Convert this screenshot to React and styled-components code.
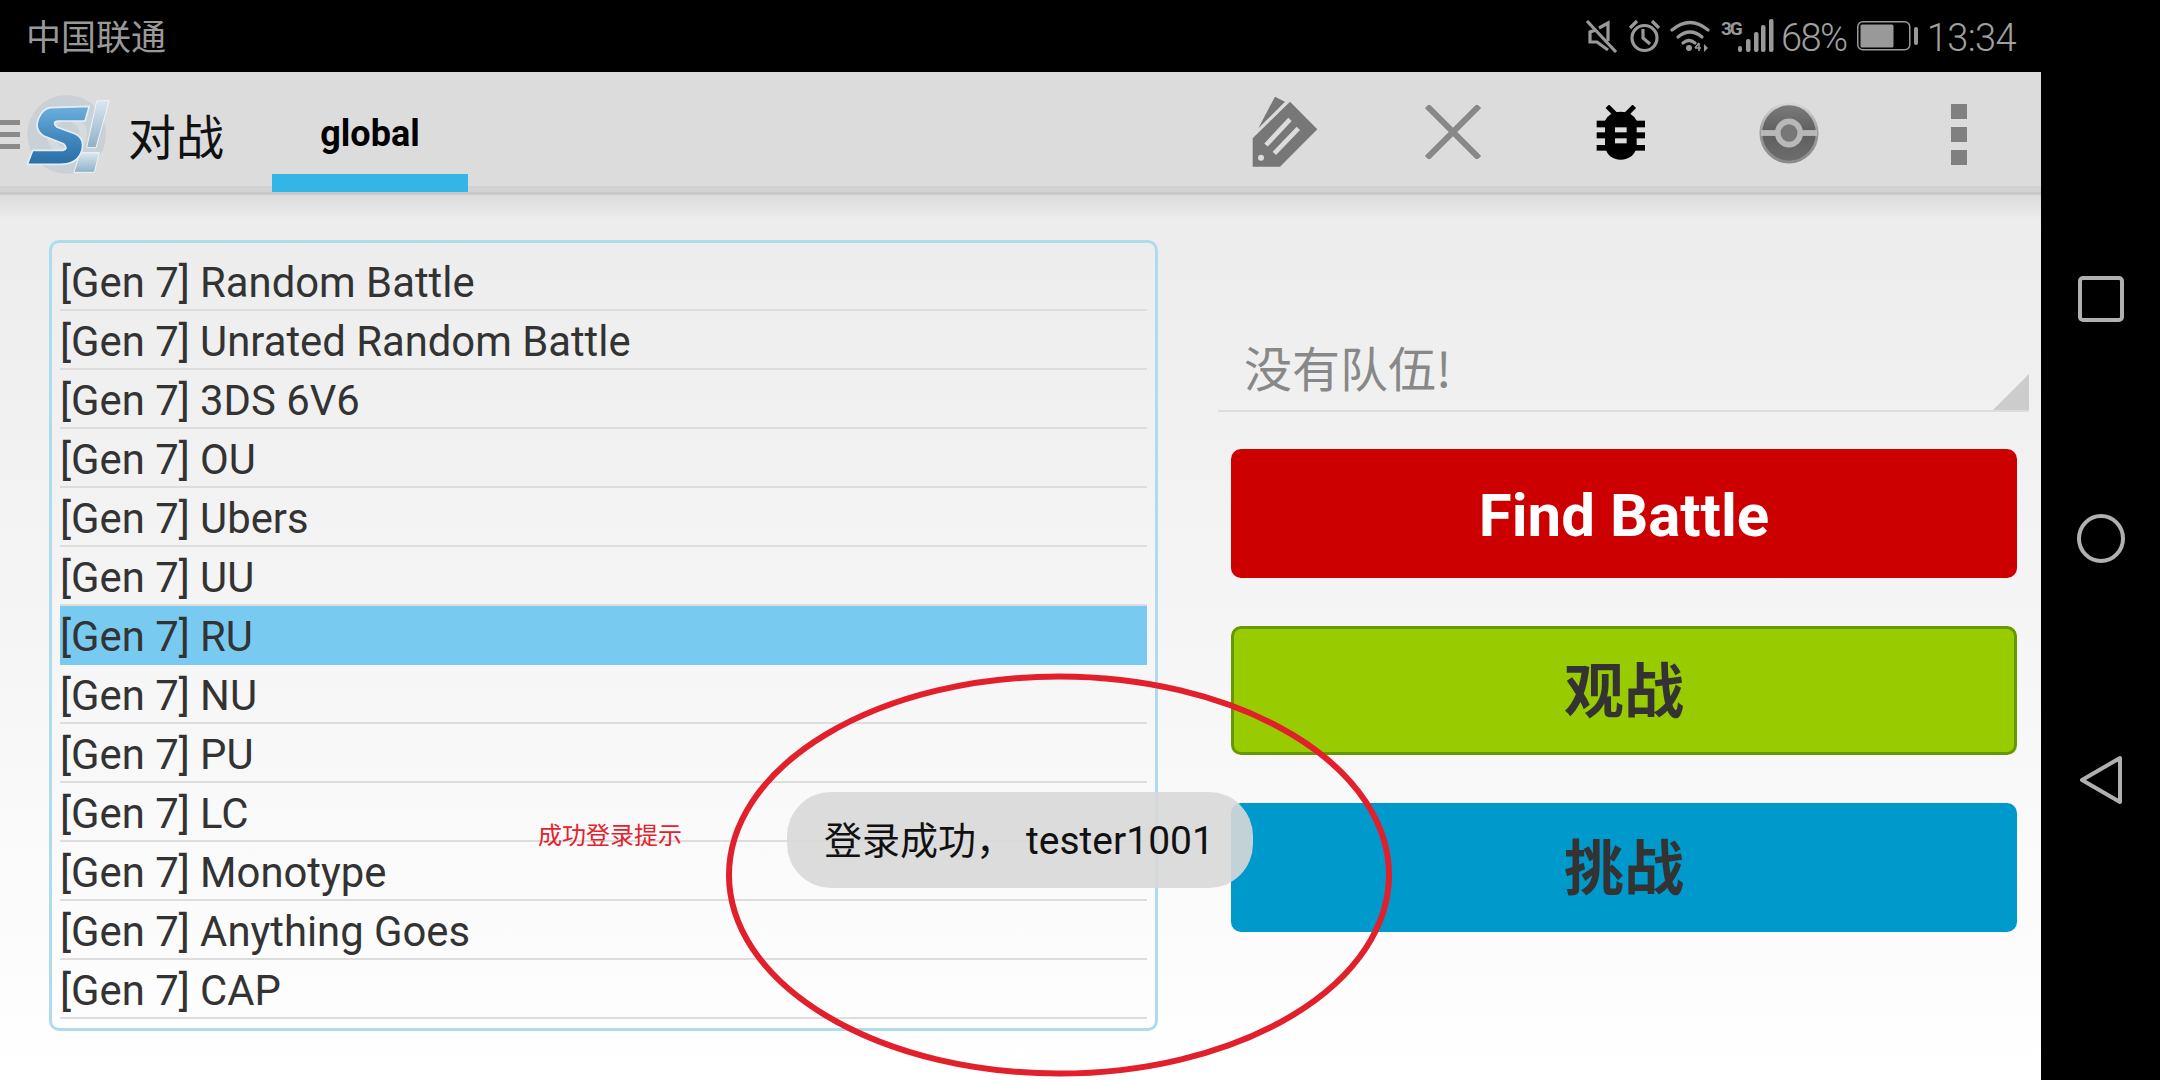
import React from "react";
import styled, { createGlobalStyle } from "styled-components";

const CJK = `"Noto Sans CJK SC", "Noto Sans", sans-serif`;
const UI = `Roboto, "Noto Sans CJK SC", sans-serif`;

const Global = createGlobalStyle`
  html, body { margin: 0; padding: 0; background: #000; }
  body { font-family: ${UI}; }
  * { box-sizing: border-box; }
`;

const Device = styled.div`
  display: flex;
  width: 2160px;
  height: 1080px;
  overflow: hidden;
  background: #000;
`;
const Screen = styled.div`
  position: relative;
  display: flex;
  flex-direction: column;
  width: 2041px;
  height: 1080px;
`;
const NavBar = styled.nav`
  display: flex;
  flex-direction: column;
  align-items: center;
  width: 119px;
  padding-top: 276px;
  gap: 192px;
  background: #000;
`;
const StatusBar = styled.header`
  display: flex;
  align-items: center;
  justify-content: space-between;
  height: 72px;
  padding: 0 25px 0 26px;
  background: #000;
  color: #999;
`;
const Carrier = styled.span`
  margin-top: -3px;
  font: 400 35px/1 ${CJK};
`;
const StatusIcons = styled.div`
  display: flex;
  align-items: center;
`;
const StatusIcon = styled.svg`
  display: block;
  flex: none;
  margin-left: ${(p) => p.$gap || 0}px;
  color: #999;
`;
const Net = styled.span`
  align-self: flex-start;
  width: 17px;
  margin: 3px 0 0 11px;
  font: 700 19px/1 Roboto, sans-serif;
  letter-spacing: -2px;
  color: #999;
`;
const StatusText = styled.span`
  margin: 3px 0 0 ${(p) => p.$gap}px;
  font: 300 ${(p) => p.$size}px/1 Roboto, sans-serif;
  letter-spacing: ${(p) => p.$track}px;
  color: #a0a0a0;
`;

const AppBar = styled.div`
  display: flex;
  align-items: center;
  height: 123px;
  background: linear-gradient(#dcdcdc 0, #dcdcdc 114px, #d2d2d2 114px, #d2d2d2 120px, #c9c9c9 120px);
`;
const Menu = styled.div`
  display: flex;
  flex-direction: column;
  gap: 7px;
  width: 20px;
  margin-top: 1px;
  height: 29px;
`;
const MenuBar = styled.i`
  display: block;
  height: 5px;
  background: #8a8a8a;
`;
const Logo = styled.svg`
  display: block;
  flex: none;
  margin-top: 1px;
`;
const Title = styled.h1`
  margin: 0 0 0 -2px;
  width: 96px;
  font: 400 48px/1 ${CJK};
  color: #111;
`;
const Tab = styled.div`
  display: flex;
  align-items: center;
  justify-content: center;
  align-self: flex-start;
  width: 196px;
  height: 120px;
  margin-left: 48px;
  padding-top: 22px;
  border-bottom: 18px solid #33b5e5;
  font: 700 36px/1 Roboto, sans-serif;
  color: #000;
`;
const Actions = styled.div`
  display: flex;
  margin-left: auto;
  align-self: flex-start;
  height: 120px;
`;
const Action = styled.div`
  display: flex;
  align-items: center;
  justify-content: center;
  width: 168px;
`;
const ActionIcon = styled.svg`
  display: block;
  margin-top: ${(p) => p.$drop || 0}px;
`;
const Dots = styled.div`
  display: flex;
  flex-direction: column;
  gap: 8px;
  margin: 4px 0 0 4px;
`;
const Dot = styled.i`
  display: block;
  width: 16px;
  height: 15px;
  background: #808080;
`;

const Main = styled.main`
  flex: 1;
  display: flex;
  padding: 45px 12px 0 49px;
  background:
    linear-gradient(rgba(0, 0, 0, 0.07), rgba(0, 0, 0, 0) 24px),
    linear-gradient(#ececec, #ffffff);
`;
const List = styled.ul`
  flex: none;
  width: 1109px;
  height: 791px;
  margin: 0;
  padding: 9px 8px 0;
  list-style: none;
  border: 3px solid #aedcef;
  border-radius: 10px;
`;
const Row = styled.li`
  display: flex;
  align-items: flex-end;
  height: 59px;
  padding: 0 0 3px 0;
  border-bottom: 2px solid ${(p) => (p.$active ? "transparent" : "#dddddd")};
  background: ${(p) => (p.$active ? "#78caf1" : "transparent")};
  font: 400 41.8px/47px Roboto, sans-serif;
  color: #333;
  white-space: pre;
`;
const Side = styled.section`
  flex: 1;
  display: flex;
  flex-direction: column;
  margin-left: 60px;
  padding-top: 95px;
`;
const Picker = styled.div`
  position: relative;
  height: 77px;
  padding: 1px 0 0 26px;
  border-bottom: 2px solid #dddddd;
  font: 400 48px/60px ${CJK};
  color: #888;
  &::after {
    content: "";
    position: absolute;
    right: 0;
    bottom: 0;
    border-style: solid;
    border-width: 0 0 36px 36px;
    border-color: transparent transparent #cccccc transparent;
  }
`;
const Buttons = styled.div`
  display: flex;
  flex-direction: column;
  gap: 48px;
  margin: 37px 12px 0 13px;
`;
const Button = styled.button`
  display: flex;
  align-items: center;
  justify-content: center;
  height: 129px;
  padding: 4px 0 0;
  border: ${(p) => (p.$line ? `3px solid ${p.$line}` : "0")};
  border-radius: 10px;
  background: ${(p) => p.$bg};
  color: ${(p) => p.$fg};
  font: 700 60px/1 ${UI};
`;

const Toast = styled.div`
  position: absolute;
  left: 787px;
  top: 792px;
  display: flex;
  align-items: center;
  width: 466px;
  height: 96px;
  padding: 2px 0 0 37px;
  border-radius: 44px;
  background: rgba(216, 216, 216, 0.9);
  font: 400 38px/1 ${UI};
  color: #111;
  white-space: pre;
`;
const ToastName = styled.span`
  margin-left: 12px;
  font-size: 39px;
`;
const Note = styled.span`
  position: absolute;
  left: 538px;
  top: 822px;
  font: 400 24px/1 ${CJK};
  color: #e2222c;
`;
const Ring = styled.svg`
  position: absolute;
  left: 724px;
  top: 672px;
  pointer-events: none;
`;

const formats = [
  "Random Battle",
  "Unrated Random Battle",
  "3DS 6V6",
  "OU",
  "Ubers",
  "UU",
  "RU",
  "NU",
  "PU",
  "LC",
  "Monotype",
  "Anything Goes",
  "CAP",
];

const Mute = () => (
  <StatusIcon width="33" height="34" viewBox="0 0 33 34" fill="none" stroke="currentColor" strokeWidth="3.2">
    <path d="M2 2 L31 33" />
    <path d="M11 11 L5 13 V23 H12 L23 31" />
    <path d="M14 9 L23 4 V22" />
  </StatusIcon>
);
const Alarm = () => (
  <StatusIcon $gap={10} width="33" height="34" viewBox="0 0 33 34" fill="none" stroke="currentColor" strokeWidth="3.2">
    <circle cx="16.5" cy="19" r="12.5" />
    <path d="M2 9 L9 2 M31 9 L24 2" />
    <path d="M15 10 V19 L22 25" />
  </StatusIcon>
);
const Wifi = () => (
  <StatusIcon $gap={9} width="40" height="34" viewBox="0 0 40 34" fill="none" stroke="currentColor" strokeWidth="3.2" strokeLinecap="round">
    <path d="M2 11 Q20 -4 38 11" />
    <path d="M8 18 Q20 8 32 18" />
    <path d="M13 24 Q19 19 25 24" />
    <circle cx="19" cy="29" r="3" fill="currentColor" stroke="none" />
    <path d="M25 29 h6 M29 24 v8 M25 29 l4 -5" strokeWidth="1.6" strokeLinecap="butt" />
    <path d="M34 25 v8 l4 -4 z" fill="currentColor" stroke="none" />
  </StatusIcon>
);
const Signal = () => (
  <StatusIcon width="36" height="34" viewBox="0 0 36 34" fill="currentColor">
    <rect x="0" y="27" width="4" height="6" rx="2" />
    <rect x="8" y="20" width="4.5" height="13" rx="2" />
    <rect x="16" y="13" width="4.5" height="20" rx="2" />
    <rect x="23" y="6" width="4.5" height="27" rx="2" />
    <rect x="31" y="0" width="4.5" height="33" rx="2" />
  </StatusIcon>
);
const Battery = () => (
  <StatusIcon $gap={10} width="61" height="30" viewBox="0 0 61 30" fill="none">
    <rect x="0.75" y="0.75" width="52" height="28" rx="5" stroke="#999" strokeWidth="1.5" />
    <rect x="3.5" y="3.5" width="33" height="23" rx="1.5" fill="#999" />
    <rect x="57" y="6" width="4" height="18" rx="2" fill="#999" />
  </StatusIcon>
);

const SLogo = () => (
  <Logo width="110" height="95" viewBox="60 0 330 285">
    <defs>
      <linearGradient id="sFill" x1="0" y1="0" x2="0" y2="1">
        <stop offset="0" stopColor="#6db0dc" />
        <stop offset="0.55" stopColor="#4088bd" />
        <stop offset="1" stopColor="#2a6fa6" />
      </linearGradient>
      <linearGradient id="markFill" x1="0" y1="0" x2="0" y2="1">
        <stop offset="0" stopColor="#dbe7f0" />
        <stop offset="1" stopColor="#8fb0c8" />
      </linearGradient>
    </defs>
    <circle cx="200" cy="142" r="118" fill="#c9d1d6" />
    <circle cx="200" cy="142" r="50" fill="none" stroke="#d6dadc" strokeWidth="22" />
    <path d="M290 42 L328 40 L288 182 L260 182 Z" fill="url(#markFill)" stroke="#f0f4f6" strokeWidth="3" />
    <path d="M240 197 L298 197 L283 256 L222 256 Z" fill="url(#markFill)" stroke="#f0f4f6" strokeWidth="3" />
    <path
      d="M150 62 L268 58 L255 102 L172 102 Q156 106 170 120 L225 140 Q256 155 245 192 Q232 232 180 232 L82 232 L98 190 L190 190 Q206 184 190 170 L130 146 Q100 126 118 90 Q130 65 150 62 Z"
      fill="url(#sFill)"
      stroke="#e6eef3"
      strokeWidth="5"
      strokeLinejoin="round"
    />
  </Logo>
);
const TagIcon = () => (
  <ActionIcon width="90" height="85" viewBox="0 0 270 255">
    <path d="M105 20 L135 35 L55 115 Z" fill="#777" />
    <path d="M150 35 L232 118 L120 230 L38 230 L38 145 Z" fill="#777" />
    <path d="M150 88 L78 165 M175 115 L103 190" stroke="#dcdcdc" strokeWidth="14" />
    <circle cx="63" cy="203" r="9" fill="#dcdcdc" />
  </ActionIcon>
);
const CloseIcon = () => (
  <ActionIcon width="56" height="54" viewBox="0 0 56 54" fill="none" stroke="#888" strokeWidth="6">
    <path d="M2 1 L54 53 M54 1 L2 53" />
  </ActionIcon>
);
const BugIcon = () => (
  <ActionIcon $drop={2} width="50" height="56" viewBox="18 28 150 168">
    <path d="M52 32 L78 58 M133 32 L107 58" stroke="#000" strokeWidth="15" />
    <path d="M45 75 Q58 48 92 48 Q127 48 140 75 V155 Q130 192 92 192 Q55 192 45 155 Z" fill="#000" />
    <rect x="20" y="75" width="145" height="20" />
    <rect x="20" y="110" width="145" height="18" />
    <rect x="20" y="148" width="145" height="17" />
    <rect x="75" y="95" width="35" height="15" fill="#dcdcdc" />
    <rect x="75" y="128" width="35" height="15" fill="#dcdcdc" />
  </ActionIcon>
);
const BallIcon = () => (
  <ActionIcon $drop={1} width="60" height="64" viewBox="0 0 64 66" preserveAspectRatio="none">
    <defs>
      <linearGradient id="ballRim" x1="0" y1="0" x2="0" y2="1">
        <stop offset="0" stopColor="#d6d6d6" />
        <stop offset="0.5" stopColor="#9a9a9a" />
        <stop offset="1" stopColor="#8a8a8a" />
      </linearGradient>
      <linearGradient id="ballFill" x1="0" y1="0" x2="0" y2="1">
        <stop offset="0" stopColor="#7c7c7c" />
        <stop offset="0.5" stopColor="#5e5e5e" />
        <stop offset="1" stopColor="#6e6e6e" />
      </linearGradient>
    </defs>
    <circle cx="32" cy="33" r="30" fill="url(#ballFill)" stroke="url(#ballRim)" strokeWidth="3" />
    <rect x="2" y="30" width="60" height="6" fill="#b8b8b8" />
    <circle cx="32" cy="33" r="12" fill="#777" stroke="#b8b8b8" strokeWidth="6" />
  </ActionIcon>
);

export default function App() {
  return (
    <>
      <Global />
      <Device>
        <Screen>
          <StatusBar>
            <Carrier>中国联通</Carrier>
            <StatusIcons>
              <Mute />
              <Alarm />
              <Wifi />
              <Net>3G</Net>
              <Signal />
              <StatusText $gap={7} $size={38} $track={-1.5}>68%</StatusText>
              <Battery />
              <StatusText $gap={9} $size={38} $track={-0.6}>13:34</StatusText>
            </StatusIcons>
          </StatusBar>
          <AppBar>
            <Menu>
              <MenuBar />
              <MenuBar />
              <MenuBar />
            </Menu>
            <SLogo />
            <Title>对战</Title>
            <Tab>global</Tab>
            <Actions>
              <Action><TagIcon /></Action>
              <Action><CloseIcon /></Action>
              <Action><BugIcon /></Action>
              <Action><BallIcon /></Action>
              <Action>
                <Dots>
                  <Dot />
                  <Dot />
                  <Dot />
                </Dots>
              </Action>
            </Actions>
          </AppBar>
          <Main>
            <List>
              {formats.map((name) => (
                <Row key={name} $active={name === "RU"}>[Gen 7] {name}</Row>
              ))}
            </List>
            <Side>
              <Picker>没有队伍!</Picker>
              <Buttons>
                <Button $bg="#cc0000" $fg="#ffffff">Find Battle</Button>
                <Button $bg="#99cc00" $fg="#333333" $line="#669900">观战</Button>
                <Button $bg="#0099cc" $fg="#333333">挑战</Button>
              </Buttons>
            </Side>
          </Main>
          <Note>成功登录提示</Note>
          <Toast>登录成功，<ToastName>tester1001</ToastName></Toast>
          <Ring width="672" height="408" viewBox="0 0 672 408" fill="none">
            <ellipse cx="335" cy="203" rx="330" ry="198.5" stroke="#e2202c" strokeWidth="6" />
          </Ring>
        </Screen>
        <NavBar>
          <svg width="46" height="46" viewBox="0 0 46 46" fill="none" stroke="#b0b0b0" strokeWidth="4">
            <rect x="2" y="2" width="42" height="42" rx="3" />
          </svg>
          <svg width="48" height="49" viewBox="0 0 48 49" fill="none" stroke="#b0b0b0" strokeWidth="4">
            <ellipse cx="24" cy="24.5" rx="22" ry="22.5" />
          </svg>
          <svg width="44" height="50" viewBox="0 0 44 50" fill="none" stroke="#b0b0b0" strokeWidth="4" strokeLinejoin="round">
            <path d="M3 25 L41 3 V47 Z" />
          </svg>
        </NavBar>
      </Device>
    </>
  );
}
